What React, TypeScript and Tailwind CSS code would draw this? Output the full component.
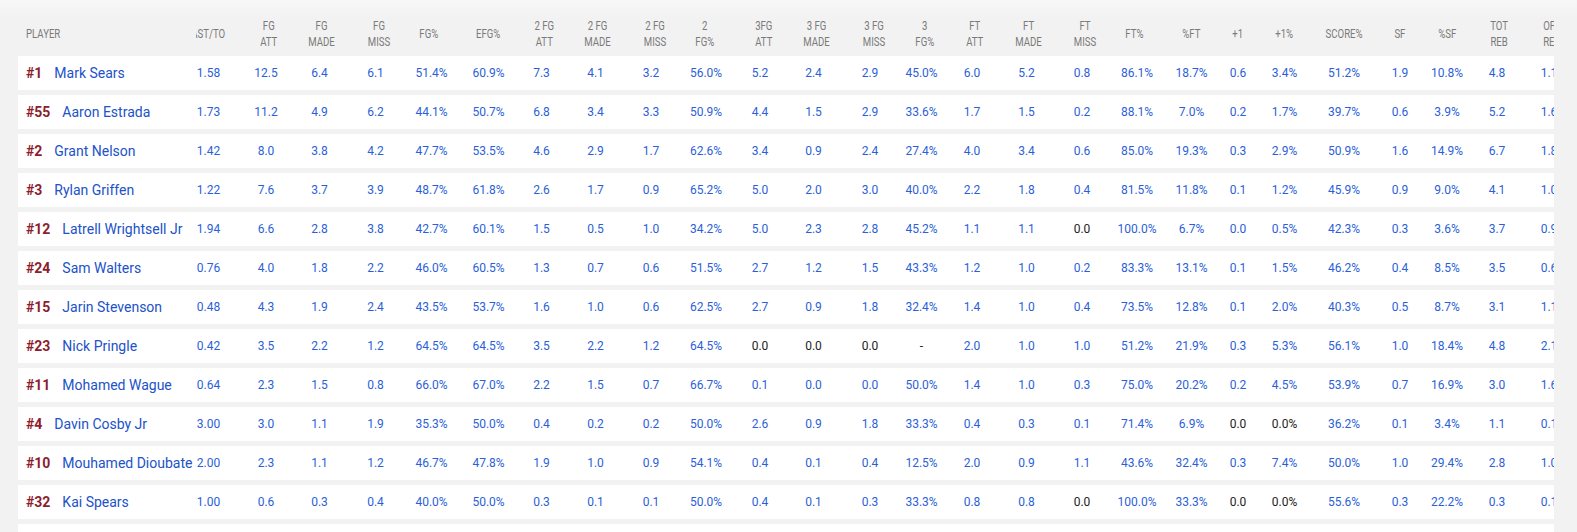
import React from "react";

type Col = { h: string[]; w: string; v: string; hh: string };

const cols: Col[] = [
  { h: ["AST/TO"], w: "w-[41px]", v: "pr-[16px]", hh: "pr-[16px]" },
  { h: ["FG", "ATT"], w: "w-[56px]", v: "pl-[2px]", hh: "pl-[7px]" },
  { h: ["FG", "MADE"], w: "w-[55px]", v: "pr-[2px]", hh: "pl-[3px]" },
  { h: ["FG", "MISS"], w: "w-[55px]", v: "", hh: "pl-[6px]" },
  { h: ["FG%"], w: "w-[57px]", v: "", hh: "pr-[6px]" },
  { h: ["EFG%"], w: "w-[55px]", v: "pl-[2px]", hh: "pl-[2px]" },
  { h: ["2 FG", "ATT"], w: "w-[53px]", v: "", hh: "pl-[6px]" },
  { h: ["2 FG", "MADE"], w: "w-[55px]", v: "", hh: "pl-[5px]" },
  { h: ["2 FG", "MISS"], w: "w-[56px]", v: "", hh: "pl-[7px]" },
  { h: ["2", "FG%"], w: "w-[54px]", v: "", hh: "pr-[3px]" },
  { h: ["3FG", "ATT"], w: "w-[54px]", v: "", hh: "pl-[7px]" },
  { h: ["3 FG", "MADE"], w: "w-[55px]", v: "pr-[2px]", hh: "pl-[5px]" },
  { h: ["3 FG", "MISS"], w: "w-[54px]", v: "pl-[2px]", hh: "pl-[9px]" },
  { h: ["3", "FG%"], w: "w-[51px]", v: "", hh: "pl-[6px]" },
  { h: ["FT", "ATT"], w: "w-[52px]", v: "pr-[2px]", hh: "pl-[3px]" },
  { h: ["FT", "MADE"], w: "w-[55px]", v: "", hh: "pl-[4px]" },
  { h: ["FT", "MISS"], w: "w-[56px]", v: "", hh: "pl-[5px]" },
  { h: ["FT%"], w: "w-[54px]", v: "", hh: "pr-[5px]" },
  { h: ["%FT"], w: "w-[51px]", v: "pl-[4px]", hh: "pl-[4px]" },
  { h: ["+1"], w: "w-[46px]", v: "", hh: "" },
  { h: ["+1%"], w: "w-[53px]", v: "pr-[6px]", hh: "pr-[6px]" },
  { h: ["SCORE%"], w: "w-[58px]", v: "pl-[2px]", hh: "pl-[3px]" },
  { h: ["SF"], w: "w-[51px]", v: "pl-[5px]", hh: "pl-[5px]" },
  { h: ["%SF"], w: "w-[48px]", v: "", hh: "" },
  { h: ["TOT", "REB"], w: "w-[52px]", v: "", hh: "pl-[5px]" },
  { h: ["OFF", "REB"], w: "w-[52px]", v: "", hh: "pl-[6px]" },
];

type Row = { n: string; name: string; vals: string[]; black: number[] };

const rows: Row[] = [
  { n: "#1", name: "Mark Sears", vals: "1.58 12.5 6.4 6.1 51.4% 60.9% 7.3 4.1 3.2 56.0% 5.2 2.4 2.9 45.0% 6.0 5.2 0.8 86.1% 18.7% 0.6 3.4% 51.2% 1.9 10.8% 4.8 1.1".split(" "), black: [] },
  { n: "#55", name: "Aaron Estrada", vals: "1.73 11.2 4.9 6.2 44.1% 50.7% 6.8 3.4 3.3 50.9% 4.4 1.5 2.9 33.6% 1.7 1.5 0.2 88.1% 7.0% 0.2 1.7% 39.7% 0.6 3.9% 5.2 1.6".split(" "), black: [] },
  { n: "#2", name: "Grant Nelson", vals: "1.42 8.0 3.8 4.2 47.7% 53.5% 4.6 2.9 1.7 62.6% 3.4 0.9 2.4 27.4% 4.0 3.4 0.6 85.0% 19.3% 0.3 2.9% 50.9% 1.6 14.9% 6.7 1.8".split(" "), black: [] },
  { n: "#3", name: "Rylan Griffen", vals: "1.22 7.6 3.7 3.9 48.7% 61.8% 2.6 1.7 0.9 65.2% 5.0 2.0 3.0 40.0% 2.2 1.8 0.4 81.5% 11.8% 0.1 1.2% 45.9% 0.9 9.0% 4.1 1.0".split(" "), black: [] },
  { n: "#12", name: "Latrell Wrightsell Jr", vals: "1.94 6.6 2.8 3.8 42.7% 60.1% 1.5 0.5 1.0 34.2% 5.0 2.3 2.8 45.2% 1.1 1.1 0.0 100.0% 6.7% 0.0 0.5% 42.3% 0.3 3.6% 3.7 0.9".split(" "), black: [16] },
  { n: "#24", name: "Sam Walters", vals: "0.76 4.0 1.8 2.2 46.0% 60.5% 1.3 0.7 0.6 51.5% 2.7 1.2 1.5 43.3% 1.2 1.0 0.2 83.3% 13.1% 0.1 1.5% 46.2% 0.4 8.5% 3.5 0.6".split(" "), black: [] },
  { n: "#15", name: "Jarin Stevenson", vals: "0.48 4.3 1.9 2.4 43.5% 53.7% 1.6 1.0 0.6 62.5% 2.7 0.9 1.8 32.4% 1.4 1.0 0.4 73.5% 12.8% 0.1 2.0% 40.3% 0.5 8.7% 3.1 1.1".split(" "), black: [] },
  { n: "#23", name: "Nick Pringle", vals: "0.42 3.5 2.2 1.2 64.5% 64.5% 3.5 2.2 1.2 64.5% 0.0 0.0 0.0 - 2.0 1.0 1.0 51.2% 21.9% 0.3 5.3% 56.1% 1.0 18.4% 4.8 2.1".split(" "), black: [10, 11, 12, 13] },
  { n: "#11", name: "Mohamed Wague", vals: "0.64 2.3 1.5 0.8 66.0% 67.0% 2.2 1.5 0.7 66.7% 0.1 0.0 0.0 50.0% 1.4 1.0 0.3 75.0% 20.2% 0.2 4.5% 53.9% 0.7 16.9% 3.0 1.6".split(" "), black: [] },
  { n: "#4", name: "Davin Cosby Jr", vals: "3.00 3.0 1.1 1.9 35.3% 50.0% 0.4 0.2 0.2 50.0% 2.6 0.9 1.8 33.3% 0.4 0.3 0.1 71.4% 6.9% 0.0 0.0% 36.2% 0.1 3.4% 1.1 0.1".split(" "), black: [19, 20] },
  { n: "#10", name: "Mouhamed Dioubate", vals: "2.00 2.3 1.1 1.2 46.7% 47.8% 1.9 1.0 0.9 54.1% 0.4 0.1 0.4 12.5% 2.0 0.9 1.1 43.6% 32.4% 0.3 7.4% 50.0% 1.0 29.4% 2.8 1.0".split(" "), black: [] },
  { n: "#32", name: "Kai Spears", vals: "1.00 0.6 0.3 0.4 40.0% 50.0% 0.3 0.1 0.1 50.0% 0.4 0.1 0.3 33.3% 0.8 0.8 0.0 100.0% 33.3% 0.0 0.0% 55.6% 0.3 22.2% 0.3 0.1".split(" "), black: [16, 19, 20] },
];

export default function App() {
  return (
    <div className="min-h-screen bg-[#f2f2f2] bg-[linear-gradient(#f7f7f7,#f2f2f2_18px)] font-['Roboto',sans-serif]">
      <div className="ml-[18px] w-[1536px] overflow-hidden">
        <div className="w-max">
          <div className="flex h-[56px] items-center pt-[12px] text-[12px] leading-[16px] text-[#7a7a7a]">
            <div className="w-[178px] shrink-0 pl-[8px]">
              <div className="origin-left scale-x-[0.8] whitespace-nowrap">PLAYER</div>
            </div>
            {cols.map((c, i) => (
              <div key={i} className={`flex shrink-0 justify-center overflow-hidden ${c.w} ${c.hh}`}>
                <div className="flex scale-x-[0.8] flex-col items-center whitespace-nowrap">
                  {c.h.map((l, j) => (
                    <span key={j}>{l}</span>
                  ))}
                </div>
              </div>
            ))}
          </div>
          {rows.map((r, ri) => (
            <div key={ri} className="mb-[5px] flex h-[34px] items-center bg-white">
              <div className="w-[178px] shrink-0 whitespace-nowrap pl-[8px] text-[14px]">
                <span className="font-bold text-[#8c1d2f]">{r.n}</span>
                <span className="ml-[12px] text-[#2152c9]">{r.name}</span>
              </div>
              {r.vals.map((v, vi) => (
                <div
                  key={vi}
                  className={`shrink-0 text-center text-[12px] whitespace-nowrap ${cols[vi].w} ${cols[vi].v} ${
                    r.black.includes(vi) ? "text-[#222222]" : "text-[#2b5fd9]"
                  }`}
                >
                  {v}
                </div>
              ))}
            </div>
          ))}
          <div className="mb-[5px] flex h-[34px] items-center bg-white"></div>
        </div>
      </div>
    </div>
  );
}
